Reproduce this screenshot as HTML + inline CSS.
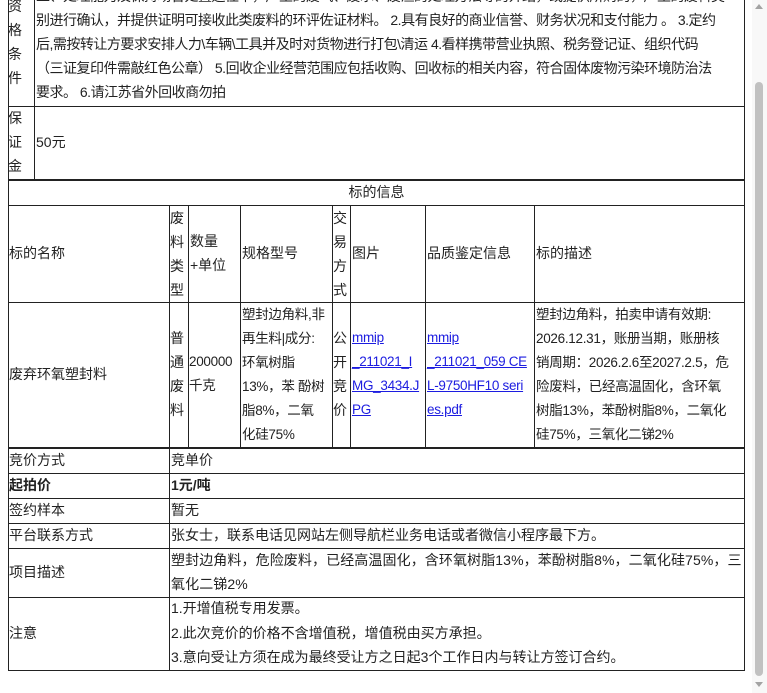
<!DOCTYPE html>
<html><head><meta charset="utf-8"><style>
*{margin:0;padding:0;box-sizing:border-box}
body{width:767px;height:693px;overflow:hidden;background:#fff;position:relative;font-family:"Liberation Sans","Noto Sans CJK SC",sans-serif;font-size:14px;color:#222}
.h{position:absolute;height:1px;background:#222}
.v{position:absolute;width:1px;background:#222}
.t{position:absolute;line-height:24px;white-space:nowrap}
.w{position:absolute;line-height:24px;white-space:nowrap}
a{text-decoration:underline;color:#1c1ce0}
.n{font-size:13.5px;letter-spacing:-0.3px}
</style></head><body>
<div class="v" style="left:8px;top:0;height:671px"></div>
<div class="v" style="left:744px;top:0;height:671px"></div>
<div class="v" style="left:34px;top:0;height:180px"></div>
<div class="h" style="left:8px;top:106px;width:737px"></div>
<div class="h" style="left:8px;top:179px;width:737px;height:2px"></div>
<div class="w" style="left:8px;top:-6px;width:20px">资<br>格<br>条<br>件</div>
<div class="w" style="left:36px;top:-16px;width:708px;overflow:hidden;letter-spacing:-0.5px">工、处理能力及保持场合处置运往中，产生的废气、废水、废渣的处理方法等的介绍，或提供所购的，产生的废料类<br>别进行确认，并提供证明可接收此类废料的环评佐证材料。 2.具有良好的商业信誉、财务状况和支付能力 。 3.定约<br>后,需按转让方要求安排人力\车辆\工具并及时对货物进行打包\清运 4.看样携带营业执照、税务登记证、组织代码<br>（三证复印件需敲红色公章） 5.回收企业经营范围应包括收购、回收标的相关内容，符合固体废物污染环境防治法<br>要求。 6.请江苏省外回收商勿拍</div>
<div class="w" style="left:8px;top:106px;width:20px">保<br>证<br>金</div>
<div class="t" style="left:36px;top:130px">50元</div>
<div class="t" style="left:8px;top:180px;width:737px;text-align:center">标的信息</div>
<div class="h" style="left:8px;top:205px;width:737px"></div>
<div class="h" style="left:8px;top:302px;width:737px"></div>
<div class="h" style="left:8px;top:447px;width:737px;height:2px"></div>
<div class="v" style="left:169px;top:205px;height:466px"></div>
<div class="v" style="left:188px;top:205px;height:243px"></div>
<div class="v" style="left:240px;top:205px;height:243px"></div>
<div class="v" style="left:332px;top:205px;height:243px"></div>
<div class="v" style="left:350px;top:205px;height:243px"></div>
<div class="v" style="left:425px;top:205px;height:243px"></div>
<div class="v" style="left:534px;top:205px;height:243px"></div>
<div class="t" style="left:9px;top:241px">标的名称</div>
<div class="w" style="left:170px;top:206px;width:16px">废<br>料<br>类<br>型</div>
<div class="w" style="left:190px;top:229px">数量<br>+单位</div>
<div class="t" style="left:242px;top:241px">规格型号</div>
<div class="w" style="left:333px;top:206px;width:16px">交<br>易<br>方<br>式</div>
<div class="t" style="left:352px;top:241px">图片</div>
<div class="t" style="left:427px;top:241px">品质鉴定信息</div>
<div class="t" style="left:536px;top:241px">标的描述</div>
<div class="t" style="left:9px;top:362px">废弃环氧塑封料</div>
<div class="w" style="left:170px;top:326px">普<br>通<br>废<br>料</div>
<div class="w n" style="left:189px;top:350px">200000<br>千克</div>
<div class="w n" style="left:242px;top:303px">塑封边角料,非<br>再生料|成分:<br>环氧树脂<br>13%，苯 酚树<br>脂8%，二氧<br>化硅75%</div>
<div class="w" style="left:333px;top:326px">公<br>开<br>竞<br>价</div>
<div class="w n" style="left:352px;top:326px"><a>mmip<br>_211021_I<br>MG_3434.J<br>PG</a></div>
<div class="w n" style="left:427px;top:326px"><a>mmip<br>_211021_059 CE<br>L-9750HF10 seri<br>es.pdf</a></div>
<div class="w n" style="left:536px;top:303px">塑封边角料，拍卖申请有效期:<br>2026.12.31，账册当期，账册核<br>销周期：2026.2.6至2027.2.5，危<br>险废料，已经高温固化，含环氧<br>树脂13%，苯酚树脂8%，二氧化<br>硅75%，三氧化二锑2%</div>
<div class="h" style="left:8px;top:473px;width:737px"></div>
<div class="h" style="left:8px;top:498px;width:737px"></div>
<div class="h" style="left:8px;top:523px;width:737px"></div>
<div class="h" style="left:8px;top:548px;width:737px"></div>
<div class="h" style="left:8px;top:597px;width:737px"></div>
<div class="h" style="left:8px;top:670px;width:737px"></div>
<div class="t" style="left:9px;top:448px">竞价方式</div><div class="t" style="left:171px;top:448px">竞单价</div>
<div class="t" style="left:9px;top:473px;font-weight:bold">起拍价</div><div class="t" style="left:171px;top:473px;font-weight:bold">1元/吨</div>
<div class="t" style="left:9px;top:498px">签约样本</div><div class="t" style="left:171px;top:498px">暂无</div>
<div class="t" style="left:9px;top:523px">平台联系方式</div><div class="t" style="left:171px;top:523px">张女士，联系电话见网站左侧导航栏业务电话或者微信小程序最下方。</div>
<div class="t" style="left:9px;top:560px">项目描述</div>
<div class="w" style="left:171px;top:548px;letter-spacing:0.1px">塑封边角料，危险废料，已经高温固化，含环氧树脂13%，苯酚树脂8%，二氧化硅75%，三<br>氧化二锑2%</div>
<div class="t" style="left:9px;top:621px">注意</div>
<div class="w" style="left:171px;top:596px;line-height:24.5px">1.开增值税专用发票。<br>2.此次竞价的价格不含增值税，增值税由买方承担。<br>3.意向受让方须在成为最终受让方之日起3个工作日内与转让方签订合约。</div>
<div style="position:absolute;left:752px;top:0;width:15px;height:693px;background:#f8f8f8"></div>
<div style="position:absolute;left:755px;top:82px;width:8px;height:594px;background:#c1c1c1;border-radius:4px"></div>
<div style="position:absolute;left:755px;top:4px;width:0;height:0;border-left:4px solid transparent;border-right:4px solid transparent;border-bottom:5px solid #a3a3a3"></div>
<div style="position:absolute;left:755px;top:682px;width:0;height:0;border-left:4px solid transparent;border-right:4px solid transparent;border-top:5px solid #a3a3a3"></div>
</body></html>
